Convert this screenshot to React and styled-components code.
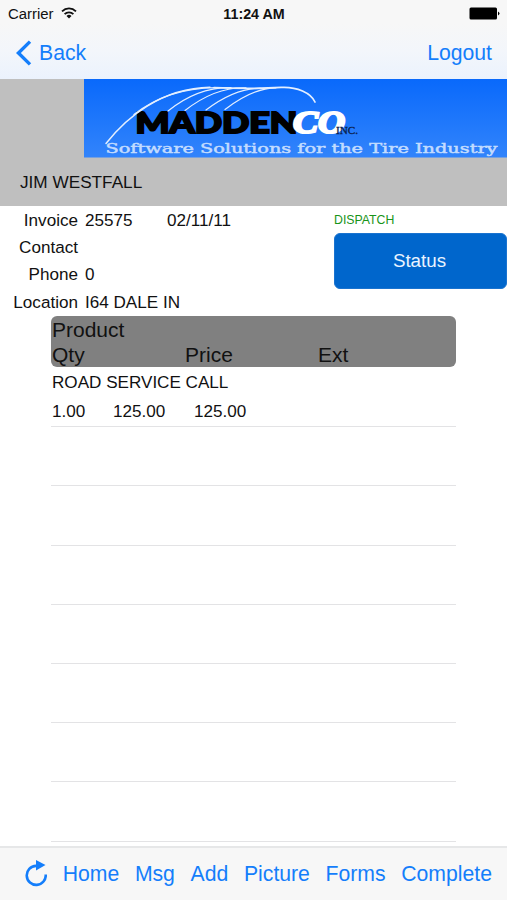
import styled, { createGlobalStyle } from "styled-components"

const GlobalStyle = createGlobalStyle`
  * {
    box-sizing: border-box;
  }

  body {
    margin: 0;
    background: white;
    font-family: "Liberation Sans", Arial, sans-serif;
    color: #111;
  }
`

const Screen = styled.div`
  width: 507px;
  height: 900px;
  display: flex;
  flex-direction: column;
  overflow: hidden;
  background: white;
`

const TopBar = styled.header`
  height: 79px;
  flex: none;
  background: linear-gradient(#f7f7f7 30%, #f3f6fb 65%, #ebf2fd);
`

const StatusBar = styled.div`
  height: 27px;
  padding: 1px 7px 0 8px;
  display: grid;
  grid-template-columns: 1fr auto 1fr;
  align-items: center;
  font-size: 14.9px;
`

const Carrier = styled.div`
  display: flex;
  align-items: center;
  gap: 7px;

  svg {
    margin-top: -3px;
  }
`

const Time = styled.div`
  font-weight: bold;
  font-size: 14.3px;
`

const Battery = styled.svg`
  justify-self: end;
  margin-top: -1px;
`

const NavBar = styled.nav`
  height: 52px;
  padding: 0 15px 0 16px;
  display: flex;
  align-items: center;
  justify-content: space-between;
`

const BarButton = styled.button`
  border: none;
  background: none;
  padding: 0;
  display: flex;
  align-items: center;
  gap: 6px;
  font-family: inherit;
  font-size: 21.2px;
  line-height: 24px;
  color: #147efb;
`

const Banner = styled.div`
  height: 127px;
  flex: none;
  background: #bfbfbf;
`

const Logo = styled.svg`
  display: block;
  margin-left: 84px;
`

const Customer = styled.div`
  padding: 14px 0 0 20px;
  font-size: 17.2px;
  line-height: 20px;
`

const Details = styled.section`
  height: 110px;
  flex: none;
  display: grid;
  grid-template-columns: 334px 173px;
`

const Fields = styled.div`
  padding-top: 1px;
  display: grid;
  grid-template-columns: 78px 75px 1fr;
  grid-auto-rows: 27.4px;
  column-gap: 7px;
  align-items: center;
  font-size: 17.1px;
`

const Label = styled.div`
  text-align: right;
`

const Value = styled.div`
  white-space: nowrap;
`

const Dispatch = styled.div`
  height: 27px;
  padding-top: 7px;
  line-height: 14px;
  font-size: 12.3px;
  color: #189418;
`

const StatusButton = styled.button`
  display: block;
  width: 173px;
  height: 56px;
  padding: 0 8px 0 6px;
  border: 1px solid #1a73cf;
  border-radius: 6px;
  background: #0066cc;
  color: #eaf4ff;
  font-family: inherit;
  font-size: 18.8px;
`

const Products = styled.section`
  width: 405px;
  height: 530px;
  flex: none;
  margin-left: 51px;
  overflow: hidden;
`

const ProductHeader = styled.div`
  height: 51px;
  border-radius: 6px;
  background: #808080;
  padding: 1px 0 0 1px;
  display: grid;
  grid-template-columns: 133px 133px 1fr;
  grid-template-rows: 25px 25px;
  align-items: center;
  font-size: 21px;
  line-height: 24px;
`

const ProductTitle = styled.div`
  grid-column: 1 / -1;
`

const List = styled.div`
  padding-top: 1px;
`

const Row = styled.div`
  height: 59.2px;
  border-bottom: 1px solid #e3e3e5;
  padding-left: 1px;
  font-size: 17.1px;
`

const RowName = styled.div`
  height: 29px;
  line-height: 30px;
`

const RowFigures = styled.div`
  display: grid;
  grid-template-columns: 61px 81px 1fr;
  line-height: 30px;
`

const Toolbar = styled.footer`
  height: 55px;
  flex: none;
  border-top: 2px solid #e6e7e8;
  background: #f7f7f7;
  padding: 0 15px 2px 24px;
  display: flex;
  align-items: center;
  justify-content: space-between;
`

const toolbarItems = ["Home", "Msg", "Add", "Picture", "Forms", "Complete"]

const rows = [
  { name: "ROAD SERVICE CALL", qty: "1.00", price: "125.00", ext: "125.00" },
  {}, {}, {}, {}, {}, {}, {},
]

const Wifi = () => (
  <svg width="16" height="12" viewBox="0 0 16 12" fill="none" stroke="#111" strokeWidth="1.8">
    <path d="M1 4.3C5 0.4 11 0.4 15 4.3" />
    <path d="M3.6 7.1C6 4.7 10 4.7 12.4 7.1" />
    <path d="M5.5 8.9Q8 6.8 10.5 8.9L8 11.6Z" fill="#111" stroke="none" />
  </svg>
)

const BackArrow = () => (
  <svg width="17" height="26" viewBox="0 0 17 26" fill="none">
    <path d="M14 1.6L2.4 13L14 24.4" stroke="#147efb" strokeWidth="3.4" />
  </svg>
)

const Refresh = () => (
  <svg width="23" height="30" viewBox="0 0 23 30" fill="none">
    <path d="M14 6.9H12A9.5 9.5 0 1 0 21.7 15.5" stroke="#147efb" strokeWidth="2.6" />
    <path d="M12 1L21.5 6L12 11.4Z" fill="#147efb" />
  </svg>
)

const MaddenLogo = () => (
  <Logo width="423" height="79" viewBox="84 79 423 79">
    <defs>
      <linearGradient id="sky" x1="0" y1="0" x2="0" y2="1">
        <stop offset="0" stopColor="#0969fb" />
        <stop offset="1" stopColor="#3284fb" />
      </linearGradient>
    </defs>
    <rect x="84" y="79" width="423" height="78.5" fill="url(#sky)" />
    <text
      x="135.5"
      y="132.8"
      fontFamily="Lato, sans-serif"
      fontWeight="900"
      fontSize="28"
      textLength="162"
      lengthAdjust="spacingAndGlyphs"
      stroke="#000"
      strokeWidth="1.9"
    >
      MADDEN
    </text>
    <text
      x="293"
      y="133.3"
      fontFamily="Liberation Serif, serif"
      fontWeight="bold"
      fontStyle="italic"
      fontSize="31"
      textLength="52"
      lengthAdjust="spacingAndGlyphs"
      fill="#fff"
      stroke="#fff"
      strokeWidth="2.2"
    >
      CO
    </text>
    <text
      x="336"
      y="134"
      fontFamily="Liberation Serif, serif"
      fontSize="10"
      textLength="22"
      lengthAdjust="spacingAndGlyphs"
      fill="#0b1f4c"
      stroke="#0b1f4c"
      strokeWidth="0.3"
    >
      INC.
    </text>
    <g fill="none" stroke="#e4efff" strokeLinecap="round">
      <path d="M106 143.5C126 118 161 88 210 87.2" strokeWidth="1.5" />
      <path d="M134 114.5C157 97 182 88 216 87.6" strokeWidth="1.4" />
      <path d="M168 111C184 98 205 87 231 87.6" strokeWidth="1.2" />
      <path d="M185 110.5C201 98 223 87 246 87.8" strokeWidth="1.2" />
      <path d="M206 110C222 98 242 88 261 88.3" strokeWidth="1.2" />
      <path d="M225 109.5C240 98 258 88 276 87.8" strokeWidth="1.2" />
      <path d="M214 87.6C237 88.6 263 88.5 281 87.4C297 86.5 311 93 315 102" strokeWidth="1.7" />
    </g>
    <text
      x="105.5"
      y="153.3"
      fontFamily="DejaVu Serif, serif"
      fontSize="12.8"
      textLength="392"
      lengthAdjust="spacingAndGlyphs"
      fill="#c3dcff"
      stroke="#c3dcff"
      strokeWidth="0.45"
    >
      Software Solutions for the Tire Industry
    </text>
  </Logo>
)

const App = () => {
  return (
    <>
      <GlobalStyle />
      <Screen>
        <TopBar>
          <StatusBar>
            <Carrier>
              Carrier
              <Wifi />
            </Carrier>
            <Time>11:24 AM</Time>
            <Battery width="31" height="13" viewBox="0 0 31 13">
              <rect x="0.5" y="0.5" width="27.5" height="12" rx="1.5" />
              <path d="M29 4.5Q32 6.5 29 8.5Z" />
            </Battery>
          </StatusBar>
          <NavBar>
            <BarButton>
              <BackArrow />
              Back
            </BarButton>
            <BarButton>Logout</BarButton>
          </NavBar>
        </TopBar>

        <Banner>
          <MaddenLogo />
          <Customer>JIM WESTFALL</Customer>
        </Banner>

        <Details>
          <Fields>
            <Label>Invoice</Label>
            <Value>25575</Value>
            <Value>02/11/11</Value>
            <Label>Contact</Label>
            <Value />
            <Value />
            <Label>Phone</Label>
            <Value>0</Value>
            <Value />
            <Label>Location</Label>
            <Value>I64 DALE IN</Value>
          </Fields>
          <div>
            <Dispatch>DISPATCH</Dispatch>
            <StatusButton>Status</StatusButton>
          </div>
        </Details>

        <Products>
          <ProductHeader>
            <ProductTitle>Product</ProductTitle>
            <div>Qty</div>
            <div>Price</div>
            <div>Ext</div>
          </ProductHeader>
          <List>
            {rows.map((row, i) => (
              <Row key={i}>
                {row.name && (
                  <>
                    <RowName>{row.name}</RowName>
                    <RowFigures>
                      <div>{row.qty}</div>
                      <div>{row.price}</div>
                      <div>{row.ext}</div>
                    </RowFigures>
                  </>
                )}
              </Row>
            ))}
          </List>
        </Products>

        <Toolbar>
          <Refresh />
          {toolbarItems.map((item) => (
            <BarButton key={item}>{item}</BarButton>
          ))}
        </Toolbar>
      </Screen>
    </>
  )
}

export default App
